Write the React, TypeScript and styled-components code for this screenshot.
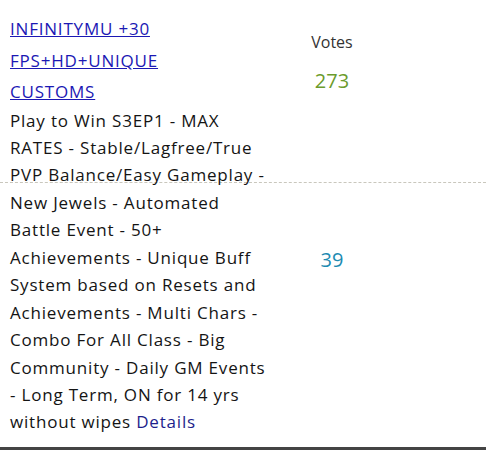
import React from "react";
import styled, { createGlobalStyle } from "styled-components";

const Global = createGlobalStyle`
  html, body { margin: 0; padding: 0; background: #fff; }
  body { font-family: "Open Sans", "DejaVu Sans", sans-serif; color: #141414; }
`;

const Page = styled.div`
  width: 486px;
  height: 450px;
  display: flex;
  flex-direction: column;
  overflow: hidden;
`;

const Board = styled.div`
  flex: 1;
  display: grid;
  grid-template-columns: 272px 120px 1fr;
  grid-template-rows: 62px 121px 1fr;
`;

const RowRule = styled.div`
  grid-row: 2;
  grid-column: 1 / -1;
  border-bottom: 1px dashed #c9c7bd;
`;

const ServerCell = styled.div`
  grid-row: 1 / 4;
  grid-column: 1;
  padding: 13px 0 0 10px;
  font-size: 17px;
  letter-spacing: 0.8px;
  z-index: 1;
`;

const Title = styled.a`
  display: block;
  width: 215px;
  color: #1b18b4;
  text-decoration: underline;
  line-height: 31.5px;
  margin-bottom: -1px;
`;

const Blurb = styled.p`
  margin: 0;
  width: 262px;
  line-height: 27.45px;
`;

const DetailsLink = styled.a`
  color: #1d1f8c;
  text-decoration: none;
`;

const Heading = styled.div`
  grid-row: 1;
  grid-column: 2;
  align-self: end;
  text-align: center;
  font-size: 16px;
  color: #333;
  padding-bottom: 9px;
`;

const Count = styled.div<{ $tone: string; $row: number; $pad: number }>`
  grid-row: ${(p) => p.$row};
  grid-column: 2;
  text-align: center;
  font-size: 20px;
  color: ${(p) => p.$tone};
  padding-top: ${(p) => p.$pad}px;
`;

const BottomBar = styled.div`
  height: 3px;
  background: #444;
`;

export default function App() {
  return (
    <>
      <Global />
      <Page>
        <Board>
          <ServerCell>
            <Title href="#">INFINITYMU +30 FPS+HD+UNIQUE CUSTOMS</Title>
            <Blurb>
              Play to Win S3EP1 - MAX RATES - Stable/Lagfree/True PVP
              Balance/Easy Gameplay - New Jewels - Automated Battle Event - 50+
              Achievements - Unique Buff System based on Resets and
              Achievements - Multi Chars - Combo For All Class - Big Community -
              Daily GM Events - Long Term, ON for 14 yrs without wipes{" "}
              <DetailsLink href="#">Details</DetailsLink>
            </Blurb>
          </ServerCell>
          <Heading>Votes</Heading>
          <Count $tone="#6b9b2c" $row={2} $pad={5}>273</Count>
          <RowRule />
          <Count $tone="#1d8bb2" $row={3} $pad={63}>39</Count>
        </Board>
        <BottomBar />
      </Page>
    </>
  );
}
